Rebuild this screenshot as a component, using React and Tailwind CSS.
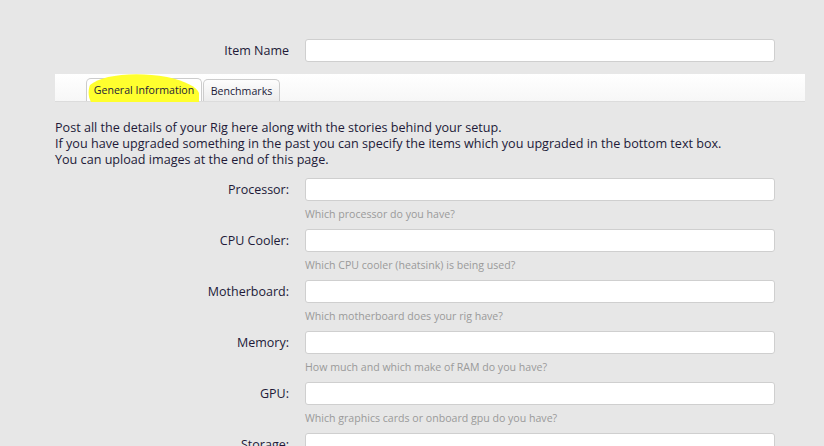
import React from 'react'

const fields = [
  { label: 'Processor:', hint: 'Which processor do you have?' },
  { label: 'CPU Cooler:', hint: 'Which CPU cooler (heatsink) is being used?' },
  { label: 'Motherboard:', hint: 'Which motherboard does your rig have?' },
  { label: 'Memory:', hint: 'How much and which make of RAM do you have?' },
  { label: 'GPU:', hint: 'Which graphics cards or onboard gpu do you have?' },
  { label: 'Storage:', hint: 'Which drives are in your rig?' },
]

const Row = ({ label, children }) => (
  <div className="flex items-start">
    <label className="w-[250px] shrink-0 pr-[16px] pt-px text-right leading-[22px] text-[12.5px] text-[#221a38]">{label}</label>
    <div className="flex-1">{children}</div>
  </div>
)

const Input = () => (
  <input type="text" className="block w-[470px] h-[23px] bg-white border border-[#cfcfcf] rounded-[3px] outline-none" />
)

export default function App() {
  return (
    <div className="min-h-screen bg-[#e7e7e7] pl-[55px] pt-[39px] overflow-hidden" style={{ fontFamily: '"Open Sans", "Noto Sans", sans-serif' }}>
      <Row label="Item Name">
        <Input />
      </Row>

      {/* tab strip */}
      <div className="mt-[12px] w-[750px] h-[28px] bg-gradient-to-b from-white to-[#f7f7f7] border-b border-[#dcdcdc] flex items-end pl-[31px]">
        <div className="relative h-[23px] w-[116px] text-center bg-white border border-b-0 border-[#cccccc] rounded-t-[5px] text-[10.6px] leading-[23px] text-[#221a38]">
          <svg className="absolute left-0 top-[-6px] pointer-events-none" width="114" height="30" viewBox="0 0 114 30">
            <path d="M3 12 C14 2 48 -2 80 4 C98 8 110 14 112 20 L112 29 L4 29 C1 24 1 17 3 12 Z" fill="#ffff2e" />
          </svg>
          <span className="relative">General Information</span>
        </div>
        <div className="h-[22px] w-[77px] ml-px text-center bg-gradient-to-b from-[#fdfdfd] to-[#ececec] border border-b-0 border-[#cccccc] rounded-t-[5px] text-[10.6px] leading-[22px] text-[#221a38]">
          Benchmarks
        </div>
      </div>

      <div className="mt-[18px] text-[12.6px] leading-[16px] text-[#221a38]">
        <p>Post all the details of your Rig here along with the stories behind your setup.</p>
        <p>If you have upgraded something in the past you can specify the items which you upgraded in the bottom text box.</p>
        <p>You can upload images at the end of this page.</p>
      </div>

      <div className="mt-[10px] flex flex-col gap-[6px]">
        {fields.map((f) => (
          <Row key={f.label} label={f.label}>
            <Input />
            <div className="mt-[5px] h-[17px] text-[10.6px] leading-[17px] text-[#9a9a9a]">{f.hint}</div>
          </Row>
        ))}
      </div>
    </div>
  )
}
